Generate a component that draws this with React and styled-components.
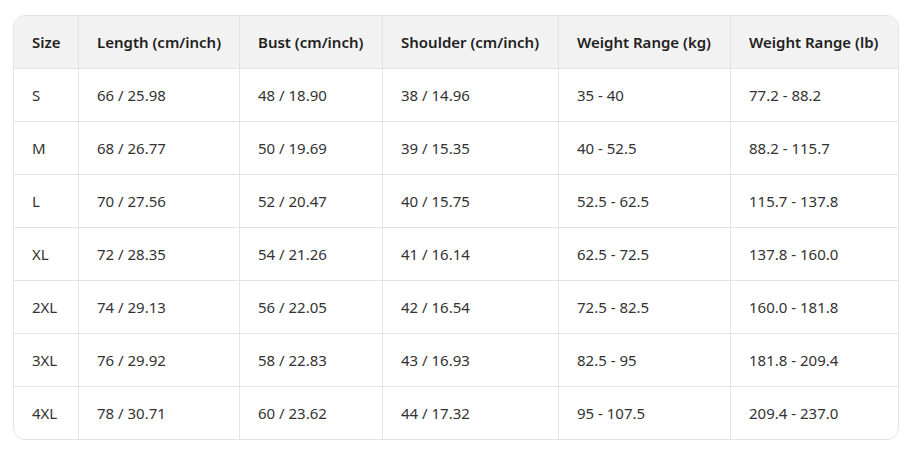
import styled, { createGlobalStyle } from "styled-components";

const GlobalStyle = createGlobalStyle`
  body {
    margin: 0;
    background: #fff;
    font-family: "Noto Sans", "Open Sans", Arial, sans-serif;
  }
`;

const columns = [
  { label: "Size", width: 65 },
  { label: "Length (cm/inch)", width: 161 },
  { label: "Bust (cm/inch)", width: 143 },
  { label: "Shoulder (cm/inch)", width: 176 },
  { label: "Weight Range (kg)", width: 172 },
  { label: "Weight Range (lb)", width: 167 },
];

const rows = [
  ["S", "66 / 25.98", "48 / 18.90", "38 / 14.96", "35 - 40", "77.2 - 88.2"],
  ["M", "68 / 26.77", "50 / 19.69", "39 / 15.35", "40 - 52.5", "88.2 - 115.7"],
  ["L", "70 / 27.56", "52 / 20.47", "40 / 15.75", "52.5 - 62.5", "115.7 - 137.8"],
  ["XL", "72 / 28.35", "54 / 21.26", "41 / 16.14", "62.5 - 72.5", "137.8 - 160.0"],
  ["2XL", "74 / 29.13", "56 / 22.05", "42 / 16.54", "72.5 - 82.5", "160.0 - 181.8"],
  ["3XL", "76 / 29.92", "58 / 22.83", "43 / 16.93", "82.5 - 95", "181.8 - 209.4"],
  ["4XL", "78 / 30.71", "60 / 23.62", "44 / 17.32", "95 - 107.5", "209.4 - 237.0"],
];

const Page = styled.div`
  padding: 15px 11px 0 13px;
`;

const Frame = styled.div`
  width: 886px;
  border: 1px solid #e3e3e3;
  border-radius: 12px;
  overflow: hidden;
  box-sizing: border-box;
`;

const Table = styled.table`
  width: 100%;
  border-collapse: separate;
  border-spacing: 0;
  table-layout: fixed;
`;

const HeadCell = styled.th`
  height: 52px;
  padding: 0 0 0 18px;
  background: #f2f2f2;
  color: #1f1f1f;
  font-size: 15px;
  font-weight: 600;
  text-align: left;
  white-space: nowrap;
  border-bottom: 1px solid #e3e3e3;
  border-right: ${(p) => (p.$last ? "none" : "1px solid #e3e3e3")};
`;

const Cell = styled.td`
  height: 52px;
  padding: 0 0 0 18px;
  color: #333;
  font-size: 15px;
  font-weight: 400;
  white-space: nowrap;
  border-bottom: ${(p) => (p.$lastRow ? "none" : "1px solid #e3e3e3")};
  border-right: ${(p) => (p.$last ? "none" : "1px solid #e3e3e3")};
`;

export default function App() {
  return (
    <>
      <GlobalStyle />
      <Page>
        <Frame>
          <Table>
            <colgroup>
              {columns.map((c) => (
                <col key={c.label} style={{ width: c.width }} />
              ))}
            </colgroup>
            <thead>
              <tr>
                {columns.map((c, i) => (
                  <HeadCell key={c.label} $last={i === columns.length - 1}>
                    {c.label}
                  </HeadCell>
                ))}
              </tr>
            </thead>
            <tbody>
              {rows.map((r, ri) => (
                <tr key={r[0]}>
                  {r.map((v, i) => (
                    <Cell
                      key={i}
                      $last={i === r.length - 1}
                      $lastRow={ri === rows.length - 1}
                    >
                      {v}
                    </Cell>
                  ))}
                </tr>
              ))}
            </tbody>
          </Table>
        </Frame>
      </Page>
    </>
  );
}
